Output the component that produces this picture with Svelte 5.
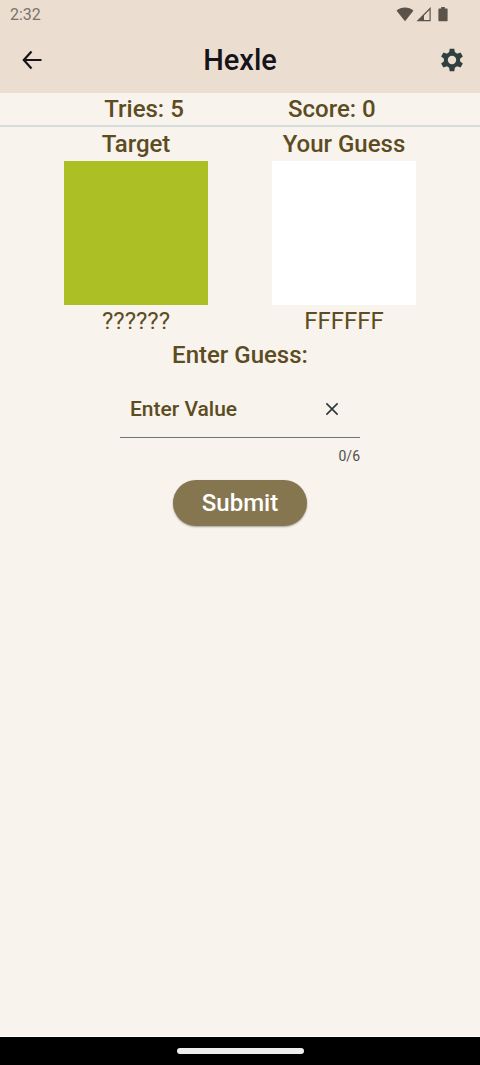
<script>
  let tries = 5;
  let score = 0;
  let target = '#acc025';
  let lastGuess = 'FFFFFF';
  let value = '';

  function submit() {
    if (!/^[0-9a-f]{6}$/i.test(value) || tries === 0) return;
    lastGuess = value.toUpperCase();
    tries -= 1;
    value = '';
  }
</script>

<div class="screen">
  <header>
    <div class="status">
      <span>2:32</span>
      <div class="status-icons">
        <svg width="18" height="16" viewBox="0 0 18 16" aria-hidden="true">
          <path d="M9 15.2 0.6 4.8C5 0.4 13 0.4 17.4 4.8Z" />
        </svg>
        <svg width="16" height="16" viewBox="0 0 16 16" aria-hidden="true">
          <path d="M0.5 15.2 14.7 1v14.2ZM8 14h5.500V4L8 9.500Z" fill-rule="evenodd" />
        </svg>
        <svg class="battery" width="10" height="16" viewBox="0 0 10 16" aria-hidden="true">
          <path d="M3.2 1h3.6v1.6H9q0.6 0 0.6 0.6v11.4q0 0.6-0.6 0.6H1q-0.6 0-0.6-0.6V3.2q0-0.6 0.6-0.6h2.2Z" />
        </svg>
      </div>
    </div>
    <div class="app-bar">
      <button class="icon-btn" aria-label="Back">
        <svg width="24" height="24" viewBox="0 0 24 24" aria-hidden="true">
          <path d="M11.500 3.500 3.800 12l7.700 8.500M4 12h17.500" fill="none" stroke="#16131a" stroke-width="2.200" />
        </svg>
      </button>
      <h1>Hexle</h1>
      <button class="icon-btn" aria-label="Settings">
        <svg width="24" height="24" viewBox="0 0 24 24" aria-hidden="true">
          <circle cx="12" cy="12" r="6.200" fill="none" stroke="#2f403f" stroke-width="4" />
          {#each [0, 60, 120, 180, 240, 300] as angle}
            <path d="M9 5.200 9.700 0.800h4.600l0.700 4.400Z" fill="#2f403f" transform="rotate({angle} 12 12)" />
          {/each}
        </svg>
      </button>
    </div>
  </header>

  <main>
    <div class="row stats">
      <span>Tries: {tries}</span>
      <span>Score: {score}</span>
    </div>

    <div class="row">
      <section>
        <h2>Target</h2>
        <div class="swatch" style="background: {target}"></div>
        <p>??????</p>
      </section>
      <section>
        <h2>Your Guess</h2>
        <div class="swatch" style="background: #{lastGuess}"></div>
        <p>{lastGuess}</p>
      </section>
    </div>

    <form on:submit|preventDefault={submit}>
      <label for="guess">Enter Guess:</label>
      <div class="field">
        <input id="guess" type="text" maxlength="6" placeholder="Enter Value" autocomplete="off" bind:value />
        <button type="button" class="clear" aria-label="Clear" on:click={() => (value = '')}>
          <svg width="20" height="20" viewBox="0 0 20 20" aria-hidden="true">
            <path d="M4.400 4.400 15.600 15.600M15.600 4.400 4.400 15.600" stroke="#2d3638" stroke-width="1.6" />
          </svg>
        </button>
      </div>
      <span class="counter">{value.length}/6</span>
      <button class="submit">Submit</button>
    </form>
  </main>

  <footer><div class="handle"></div></footer>
</div>

<style>
  :global(body) { background: #f8f3ed; }
  .screen {
    min-height: 100vh;
    display: flex; flex-direction: column;
    background: #f8f3ed; color: #5c4c22;
    font-family: Roboto, "Liberation Sans", sans-serif;
  }
  header { background: #ebded1; }
  .status {
    display: flex; align-items: center; justify-content: space-between;
    height: 28px; padding: 0 32px 0 10px;
    font-size: 16px; color: #7b7268;
  }
  .status-icons { display: flex; gap: 2px; }
  .status-icons svg { fill: #5b5249; }
  .status-icons .battery { margin-left: 4px; }
  .app-bar {
    display: grid; grid-template-columns: 1fr auto 1fr; align-items: center;
    height: 64px; padding: 0 4px 1px;
  }
  h1 { margin: 0; font-size: 29px; line-height: 32px; font-weight: 500; color: #16131a; }
  button {
    border: none; background: none; padding: 0;
    font-family: inherit; cursor: pointer;
  }
  .icon-btn {
    width: 56px; height: 48px;
    display: flex; align-items: center; justify-content: center;
  }
  .icon-btn:last-child { width: 48px; justify-self: end; }
  main { flex: 1; font-size: 24px; line-height: 34px; }
  .row { display: flex; justify-content: space-evenly; }
  .stats { border-bottom: 2px solid #d6dcda; font-weight: 500; line-height: 32px; }
  section { width: 30%; text-align: center; }
  h2 { margin: 0; font-size: 24px; font-weight: 500; white-space: nowrap; }
  p { margin: 0; font-weight: 400; line-height: 33px; }
  .swatch { aspect-ratio: 1; }
  form { display: flex; flex-direction: column; align-items: center; }
  label { font-weight: 500; }
  .field {
    box-sizing: border-box;
    width: 50%; height: 66px;
    display: flex; align-items: center;
    padding: 8px 8px 0 10px;
    border-bottom: 1px solid #66787a;
  }
  input {
    flex: 1; min-width: 0; padding: 0;
    border: none; outline: none; background: none;
    font: 500 21px Roboto, "Liberation Sans", sans-serif;
    color: #5c4c22;
  }
  input::placeholder { color: #5c4c22; opacity: 1; }
  .clear {
    width: 40px; height: 40px;
    display: flex; align-items: center; justify-content: center;
  }
  .counter {
    width: 50%; padding-top: 8px;
    text-align: right; font-size: 14px; line-height: 20px; color: #50504c;
  }
  .submit {
    margin-top: 14px; height: 46px; padding: 0 29px;
    border-radius: 23px; background: #857650; color: #fff;
    font-size: 24px; font-weight: 500;
    box-shadow: 0 1px 2px rgba(0, 0, 0, 0.35);
  }
  footer {
    display: flex; align-items: center; justify-content: center;
    height: 28px; background: #000; border-top: 1px solid #fff;
  }
  .handle { width: 127px; height: 6px; border-radius: 3px; background: #eee; }
</style>
